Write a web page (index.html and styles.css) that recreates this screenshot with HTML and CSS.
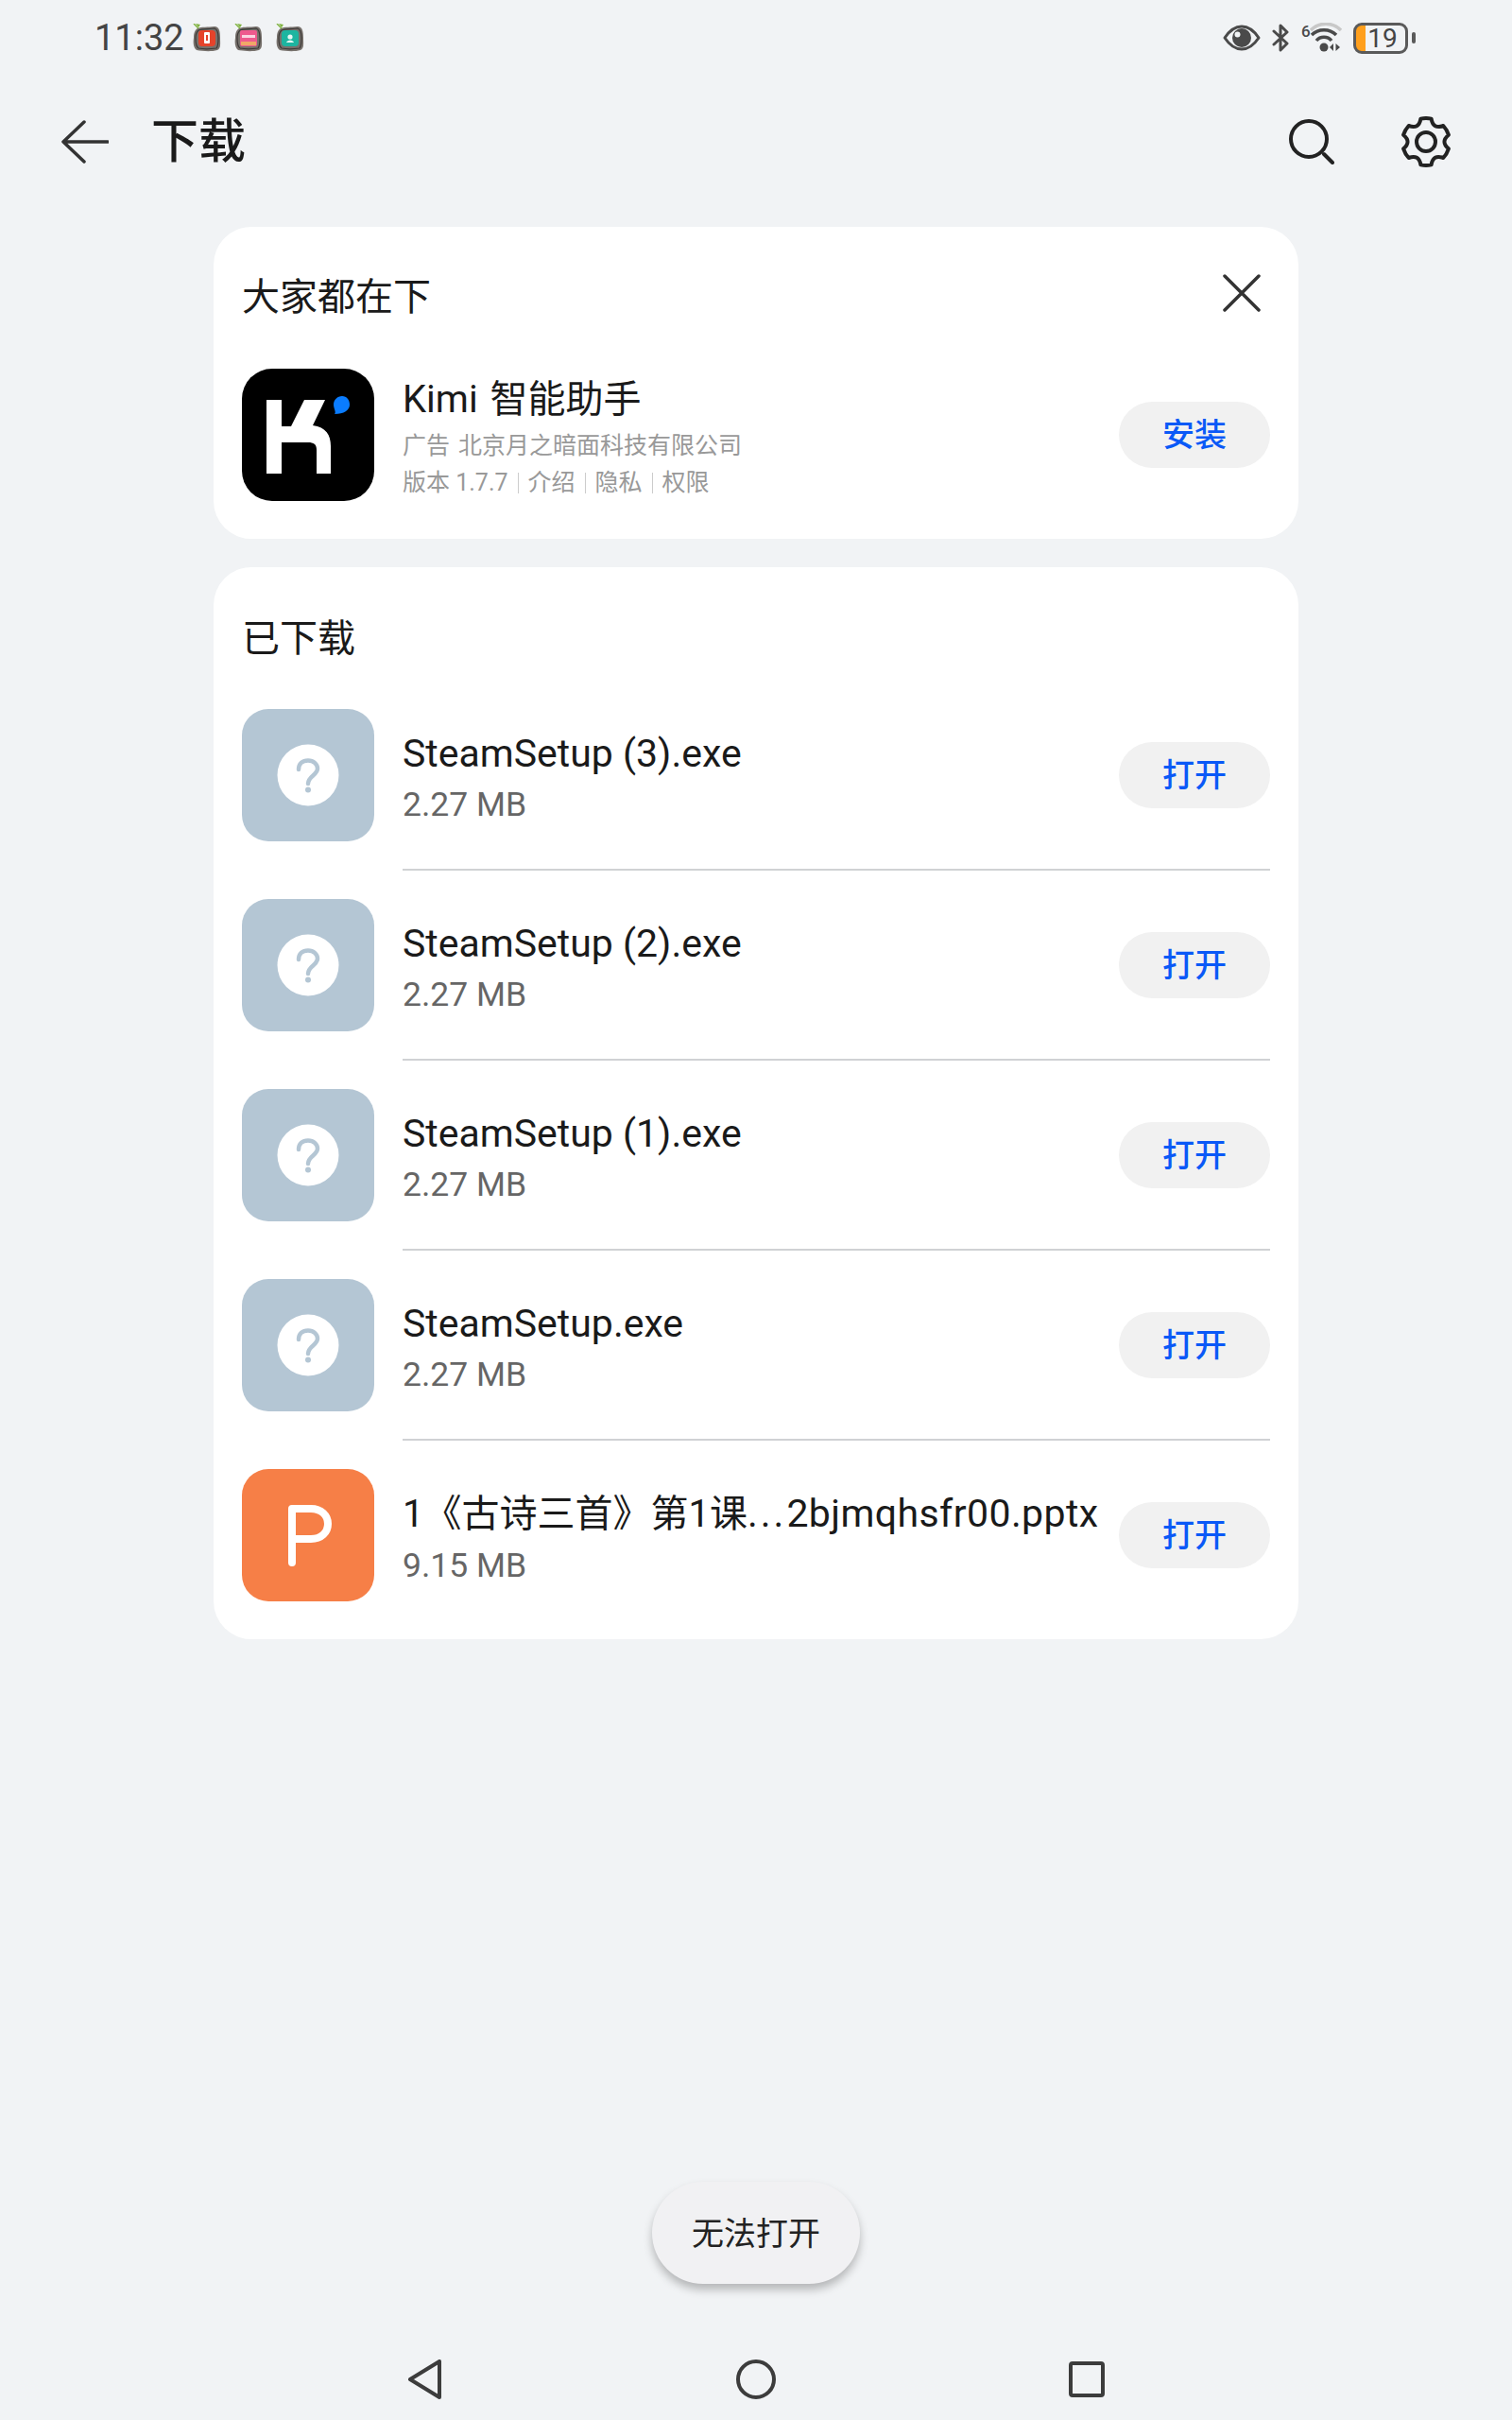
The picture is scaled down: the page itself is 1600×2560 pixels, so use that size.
FILE: index.html
```html
<!DOCTYPE html>
<html lang="zh-CN">

<head>
    <meta charset="UTF-8">
    <meta name="viewport" content="width=device-width, initial-scale=1.0">
    <title>下载</title>
    <link rel="stylesheet" href="styles.css">
</head>

<body>
    <svg class="defs" width="0" height="0">
        <symbol id="pet-frame" viewBox="0 0 30 30">
            <path d="M5 5 C9 3 16 4 23 3 C28 3 29 8 29 15 C29 22 30 26 26 28 C19 30 10 29 4 28 C1 26 0 21 1 15 C1 10 2 7 5 5Z" fill="#77716c"/>
            <path d="M6 7 C11 5 17 6 23 5 C26 6 27 10 27 15 C27 21 27 24 25 26 C18 27 11 27 6 26 C3 24 3 19 3 15 C3 11 4 9 6 7Z" fill="none" stroke="#3d3a38" stroke-width="1.2"/>
            <path d="M1 0 L6 5" stroke="#7fb23e" stroke-width="1.4" fill="none"/>
            <path d="M3 0 L8 1 L6 4Z" fill="#7fb23e"/>
        </symbol>
        <symbol id="unknown-file" viewBox="0 0 140 140">
            <circle cx="70" cy="70" r="32.5" fill="#fff"/>
            <path d="M60 64 C60 58 64 54.5 70 54.5 C76 54.5 80 58.5 80 63 C80 70 70 71 70 79" fill="none" stroke="#b4c6d4" stroke-width="4.5" stroke-linecap="round"/>
            <circle cx="70" cy="85.5" r="3" fill="#b4c6d4"/>
        </symbol>
    </svg>

    <div class="page">
        <div class="status-bar">
            <div class="status-left">
                <span class="clock">11:32</span>
                <svg class="pet" width="30" height="30" viewBox="0 0 30 30">
                    <use href="#pet-frame"/>
                    <rect x="6" y="7" width="18" height="17" rx="4" fill="#e5432b"/>
                    <rect x="12" y="9" width="6" height="12" rx="1" fill="#fff"/>
                    <rect x="14" y="12" width="2" height="6" fill="#e5432b"/>
                </svg>
                <svg class="pet" width="30" height="30" viewBox="0 0 30 30">
                    <use href="#pet-frame"/>
                    <rect x="6" y="7" width="18" height="17" rx="2" fill="#ee5a8e"/>
                    <rect x="8" y="12" width="14" height="3" fill="#fbd5e2"/>
                    <rect x="7" y="19" width="16" height="4" fill="#f0a868"/>
                </svg>
                <svg class="pet" width="30" height="30" viewBox="0 0 30 30">
                    <use href="#pet-frame"/>
                    <rect x="6" y="7" width="18" height="17" rx="4" fill="#1db5a0"/>
                    <circle cx="15" cy="14" r="2.6" fill="#e6f7f4"/>
                    <path d="M11 20 C12 16.5 18 16.5 19 20Z" fill="#e6f7f4"/>
                </svg>
            </div>
            <div class="status-right">
                <svg width="40" height="28" viewBox="0 0 40 28">
                    <path d="M2 14 C8 5 14 2 20 2 C26 2 32 5 38 14 C32 23 26 26 20 26 C14 26 8 23 2 14Z" fill="none" stroke="#4a4a4a" stroke-width="3" stroke-linejoin="round"/>
                    <circle cx="20" cy="14" r="10" fill="#4a4a4a"/>
                    <circle cx="15.5" cy="10.5" r="3" fill="#f1f3f5"/>
                </svg>
                <svg width="19" height="30" viewBox="0 0 19 30">
                    <path d="M2 8 L16 21 L9 28 V2 L16 9 L2 22" fill="none" stroke="#4a4a4a" stroke-width="3" stroke-linejoin="round" stroke-linecap="round"/>
                </svg>
                <div class="wifi">
                    <span class="wifi-six">6</span>
                    <svg width="34" height="32" viewBox="0 0 34 32">
                        <path d="M1 8 C10 -1 24 -1 33 8" fill="none" stroke="#c8c8c8" stroke-width="3.5"/>
                        <path d="M2 13 C9 6 21 6 28 13" fill="none" stroke="#4a4a4a" stroke-width="3.5"/>
                        <path d="M7 19 C11 14 19 14 23 19" fill="none" stroke="#4a4a4a" stroke-width="3.5"/>
                        <circle cx="15" cy="26" r="4.5" fill="#4a4a4a"/>
                        <path d="M25 22 V30 L21 26Z M27.500 22 V30 L32 26Z" fill="#4a4a4a"/>
                    </svg>
                </div>
                <div class="battery">19</div>
            </div>
        </div>

        <header class="top-bar">
            <svg class="back-icon" width="50" height="46" viewBox="0 0 50 46">
                <path d="M24 2 L2 23 L24 44 M2 23 H49" fill="none" stroke="#333" stroke-width="3.5" stroke-linecap="round" stroke-linejoin="round"/>
            </svg>
            <h1 class="page-title">下载</h1>
            <svg class="search-icon" width="48" height="48" viewBox="0 0 48 48">
                <circle cx="21" cy="21" r="19" fill="none" stroke="#222" stroke-width="4"/>
                <path d="M37 37 L46 46" fill="none" stroke="#222" stroke-width="4" stroke-linecap="round"/>
            </svg>
            <svg class="gear-icon" width="54" height="54" viewBox="0 0 54 54">
                <path d="M21.4 2.6 Q27 1.5 32.600 2.6 Q34.500 14 45.300 10 Q49 14 50.900 19.700 Q42 27 50.900 34.300 Q49 40 45.300 44 Q34.500 40 32.600 51.400 Q27 52.500 21.400 51.400 Q19.500 40 8.700 44 Q5 40 3.100 34.300 Q12 27 3.100 19.700 Q5 14 8.700 10 Q19.500 14 21.400 2.600Z" fill="none" stroke="#222" stroke-width="4" stroke-linejoin="round"/>
                <circle cx="27" cy="27" r="10" fill="none" stroke="#222" stroke-width="4"/>
            </svg>
        </header>

        <main class="content">
            <section class="card promo-card">
                <div class="promo-head">
                    <h2 class="card-title">大家都在下</h2>
                    <svg class="close-icon" width="40" height="40" viewBox="0 0 40 40">
                        <path d="M2 2 L38 38 M38 2 L2 38" fill="none" stroke="#333" stroke-width="3.5" stroke-linecap="round"/>
                    </svg>
                </div>
                <div class="promo-row">
                    <svg class="file-icon" width="140" height="140" viewBox="0 0 140 140">
                        <rect width="140" height="140" rx="32" fill="#000"/>
                        <path d="M26 33 H42 V61 H52 L66 33 H88 L75 60 C89 62 94 70 94 82 V111 H79 V86 C79 80 76 78 70 78 H42 V111 H26Z" fill="#fff"/>
                        <path d="M106 29 C111 29 114 33 114 38 C114 44 108 48 98 48 C100 46 97 42 97 38 C97 33 101 29 106 29Z" fill="#0a7cff"/>
                    </svg>
                    <div class="promo-text">
                        <div class="promo-name">Kimi 智能助手</div>
                        <div class="promo-meta"><span class="ad-tag">广告</span>北京月之暗面科技有限公司</div>
                        <div class="promo-meta promo-links">
                            <span>版本 1.7.7</span><i></i><span>介绍</span><i></i><span>隐私</span><i></i><span>权限</span>
                        </div>
                    </div>
                    <button class="pill-btn">安装</button>
                </div>
            </section>

            <section class="card downloads-card">
                <h2 class="card-title downloads-title">已下载</h2>

                <div class="file-row">
                    <svg class="file-icon unknown" width="140" height="140"><use href="#unknown-file"/></svg>
                    <div class="file-text">
                        <div class="file-name">SteamSetup (3).exe</div>
                        <div class="file-size">2.27 MB</div>
                    </div>
                    <button class="pill-btn">打开</button>
                </div>
                <div class="file-row">
                    <svg class="file-icon unknown" width="140" height="140"><use href="#unknown-file"/></svg>
                    <div class="file-text">
                        <div class="file-name">SteamSetup (2).exe</div>
                        <div class="file-size">2.27 MB</div>
                    </div>
                    <button class="pill-btn">打开</button>
                </div>
                <div class="file-row">
                    <svg class="file-icon unknown" width="140" height="140"><use href="#unknown-file"/></svg>
                    <div class="file-text">
                        <div class="file-name">SteamSetup (1).exe</div>
                        <div class="file-size">2.27 MB</div>
                    </div>
                    <button class="pill-btn">打开</button>
                </div>
                <div class="file-row">
                    <svg class="file-icon unknown" width="140" height="140"><use href="#unknown-file"/></svg>
                    <div class="file-text">
                        <div class="file-name">SteamSetup.exe</div>
                        <div class="file-size">2.27 MB</div>
                    </div>
                    <button class="pill-btn">打开</button>
                </div>
                <div class="file-row">
                    <svg class="file-icon" width="140" height="140" viewBox="0 0 140 140">
                        <rect width="140" height="140" rx="28" fill="#f67f47"/>
                        <path d="M53 99 V42 H73 C84 42 91 49 91 58 C91 67 84 74 73 74 H53" fill="none" stroke="#fff" stroke-width="8" stroke-linecap="round" stroke-linejoin="round"/>
                    </svg>
                    <div class="file-text">
                        <div class="file-name"><span class="name-cjk">1《古诗三首》第1课</span><span class="name-dots">...</span><span class="name-tail">2bjmqhsfr00.pptx</span></div>
                        <div class="file-size">9.15 MB</div>
                    </div>
                    <button class="pill-btn">打开</button>
                </div>
            </section>
        </main>

        <div class="help-wrap">
            <button class="help-btn">无法打开</button>
        </div>

        <nav class="nav-bar">
            <svg width="36" height="42" viewBox="0 0 36 42">
                <path d="M33 2 V40 L2 21Z" fill="none" stroke="#3c3c3c" stroke-width="4" stroke-linejoin="round"/>
            </svg>
            <svg width="42" height="42" viewBox="0 0 42 42">
                <circle cx="21" cy="21" r="19" fill="none" stroke="#3c3c3c" stroke-width="4"/>
            </svg>
            <svg width="38" height="38" viewBox="0 0 38 38">
                <rect x="2" y="2" width="34" height="34" rx="2" fill="none" stroke="#3c3c3c" stroke-width="4"/>
            </svg>
        </nav>
    </div>
</body>

</html>
```

FILE: styles.css
```css
* {
    margin: 0;
    padding: 0;
    box-sizing: border-box;
}

body {
    background: #f1f3f5;
    font-family: Roboto, "Noto Sans CJK SC", sans-serif;
    color: #1a1a1a;
}

svg {
    display: block;
    flex-shrink: 0;
}

.defs {
    position: absolute;
}

.page {
    display: flex;
    flex-direction: column;
    height: 2560px;
}

/* status bar */
.status-bar {
    display: flex;
    justify-content: space-between;
    align-items: center;
    height: 80px;
    padding: 0 103px 0 100px;
}

.status-left,
.status-right {
    display: flex;
    align-items: center;
}

.clock {
    font-size: 38px;
    line-height: 44px;
    color: #444;
    margin-right: 9px;
}

.pet {
    margin-right: 14px;
}

.status-right {
    gap: 12px;
}

.wifi {
    display: flex;
    align-items: flex-start;
}

.wifi-six {
    font-size: 17px;
    line-height: 18px;
    font-weight: 500;
    color: #4a4a4a;
    width: 9px;
}

.battery {
    position: relative;
    width: 58px;
    height: 33px;
    margin-right: 7px;
    border: 3px solid #5a5a5a;
    border-radius: 9px;
    background: linear-gradient(90deg, #ff9f1c 10px, transparent 10px);
    font-size: 28px;
    line-height: 27px;
    text-align: center;
    color: #444;
    padding-left: 4px;
}

.battery::after {
    content: '';
    position: absolute;
    top: 7px;
    right: -11px;
    width: 4px;
    height: 12px;
    border-radius: 2px;
    background: #5a5a5a;
}

/* title row */
.top-bar {
    display: flex;
    align-items: center;
    height: 140px;
    margin-bottom: 20px;
    padding: 0 64px 0 65px;
}

.page-title {
    flex: 1;
    margin-left: 45px;
    font-size: 50px;
    line-height: 60px;
    font-weight: 500;
}

.gear-icon {
    margin-left: 70px;
}

/* cards */
.content {
    flex: 1;
    display: flex;
    flex-direction: column;
    gap: 30px;
    width: 1148px;
    margin: 0 auto;
}

.card {
    background: #fff;
    border-radius: 40px;
    padding: 0 30px;
}

.promo-card {
    height: 330px;
}

.promo-head {
    display: flex;
    justify-content: space-between;
    align-items: center;
    height: 150px;
    padding-right: 10px;
}

.close-icon {
    margin-bottom: 10px;
}

.card-title {
    font-size: 40px;
    line-height: 52px;
    font-weight: 400;
}

.promo-row,
.file-row {
    display: flex;
    align-items: center;
}

.file-icon {
    margin-right: 30px;
}

.unknown {
    background: #b4c6d4;
    border-radius: 28px;
}

.promo-text,
.file-text {
    flex: 1;
    min-width: 0;
}

.promo-text {
    padding-top: 8px;
}

.file-text {
    padding-top: 5px;
}

.promo-name {
    font-size: 40px;
    line-height: 50px;
    margin-bottom: 5px;
    word-spacing: 3px;
}

.promo-meta {
    font-size: 25px;
    line-height: 38px;
    color: #999;
}

.ad-tag {
    margin-right: 9px;
}

.promo-links {
    display: flex;
    align-items: center;
    margin-top: 1px;
}

.promo-links i {
    width: 1px;
    height: 22px;
    margin: 0 10px;
    background: #ccc;
}

.pill-btn {
    width: 160px;
    height: 70px;
    flex-shrink: 0;
    padding-bottom: 6px;
    border: 0;
    border-radius: 35px;
    background: #f1f1f1;
    color: #0a59f7;
    font-family: inherit;
    font-size: 34px;
    font-weight: 500;
}

.downloads-card {
    padding-bottom: 9px;
}

.downloads-title {
    height: 120px;
    padding-top: 50px;
}

.file-row {
    position: relative;
    height: 201px;
    padding-bottom: 1px;
}

.file-row:not(:last-child)::after {
    content: '';
    position: absolute;
    left: 170px;
    right: 0;
    bottom: 0;
    height: 2px;
    background: #d0d2d4;
}

.file-name {
    font-size: 41px;
    line-height: 52px;
    white-space: nowrap;
}

.name-cjk {
    font-size: 40px;
}

.name-dots {
    letter-spacing: 3px;
}

.name-tail {
    letter-spacing: 0.4px;
}

.file-size {
    font-size: 35.500px;
    line-height: 46px;
    margin-top: 5px;
    color: #666;
}

/* bottom */
.help-wrap {
    display: flex;
    justify-content: center;
    margin-bottom: 63px;
}

.help-btn {
    width: 220px;
    height: 108px;
    padding-bottom: 3px;
    border: 0;
    border-radius: 54px;
    background: #f1f1f3;
    box-shadow: 0 6px 10px rgba(0, 0, 0, 0.25);
    color: #222;
    font-family: inherit;
    font-size: 34px;
}

.nav-bar {
    display: grid;
    grid-template-columns: repeat(3, 350px);
    justify-content: center;
    justify-items: center;
    align-items: center;
    height: 81px;
    padding-bottom: 5px;
}
```
